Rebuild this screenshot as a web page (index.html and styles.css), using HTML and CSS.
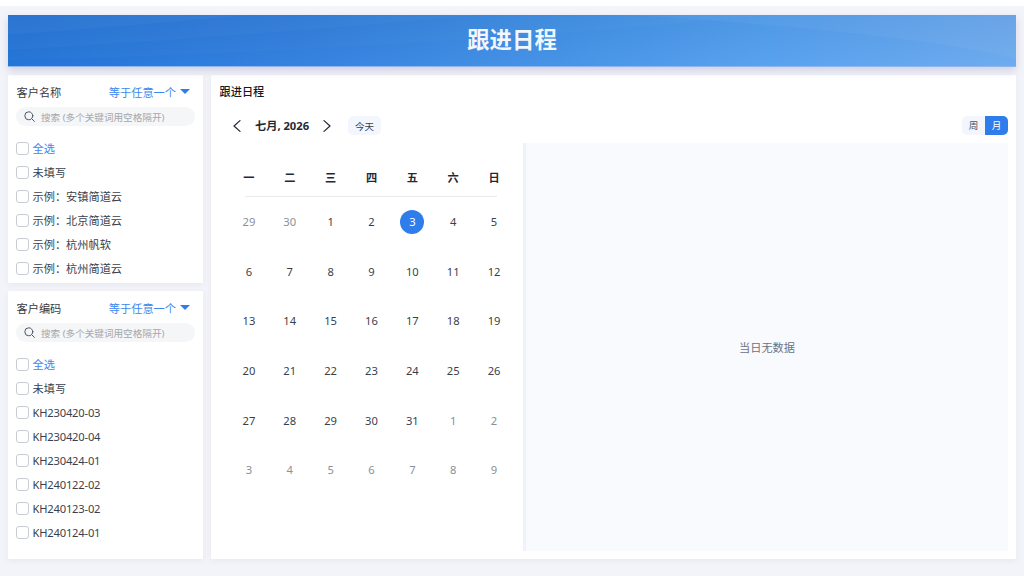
FILE: index.html
```html
<!DOCTYPE html>
<html lang="zh-CN">
<head>
  <meta charset="UTF-8" />
  <title>跟进日程</title>
  <link rel="stylesheet" href="styles.css">
</head>
<body>
  <div class="page">
    <div class="banner">
      <svg class="banner-waves" viewBox="0 0 1008 52" preserveAspectRatio="none">
        <path d="M0 20C90 14 170 6 240 0H0Z" fill="#fff" fill-opacity="0.035"/>
        <path d="M0 36C160 26 320 14 470 0H0Z" fill="#fff" fill-opacity="0.025"/>
        <path d="M0 46C250 40 520 24 760 0H0Z" fill="#fff" fill-opacity="0.02"/>
        <path d="M620 0C780 10 920 24 1008 44V0Z" fill="#fff" fill-opacity="0.04"/>
      </svg>
      <h1>跟进日程</h1>
    </div>

    <div class="main">
      <div class="filters">
        <div class="filter-card">
          <div class="filter-head">
            <span>客户名称</span>
            <span class="filter-mode">等于任意一个<i class="caret"></i></span>
          </div>
          <div class="search">
            <svg width="11" height="11" viewBox="0 0 11 11" fill="none" stroke="#4b5563" stroke-width="1" stroke-linecap="round"><circle cx="4.8" cy="4.8" r="4"/><path d="M7.8 7.8L10.4 10.4"/></svg>
            <span>搜索 (多个关键词用空格隔开)</span>
          </div>
          <div class="option-list">
            <label class="option all"><i class="check"></i>全选</label>
            <label class="option"><i class="check"></i>未填写</label>
            <label class="option"><i class="check"></i>示例：安镇简道云</label>
            <label class="option"><i class="check"></i>示例：北京简道云</label>
            <label class="option"><i class="check"></i>示例：杭州帆软</label>
            <label class="option"><i class="check"></i>示例：杭州简道云</label>
          </div>
        </div>

        <div class="filter-card grow">
          <div class="filter-head">
            <span>客户编码</span>
            <span class="filter-mode">等于任意一个<i class="caret"></i></span>
          </div>
          <div class="search">
            <svg width="11" height="11" viewBox="0 0 11 11" fill="none" stroke="#4b5563" stroke-width="1" stroke-linecap="round"><circle cx="4.8" cy="4.8" r="4"/><path d="M7.8 7.8L10.4 10.4"/></svg>
            <span>搜索 (多个关键词用空格隔开)</span>
          </div>
          <div class="option-list">
            <label class="option all"><i class="check"></i>全选</label>
            <label class="option"><i class="check"></i>未填写</label>
            <label class="option code"><i class="check"></i>KH230420-03</label>
            <label class="option code"><i class="check"></i>KH230420-04</label>
            <label class="option code"><i class="check"></i>KH230424-01</label>
            <label class="option code"><i class="check"></i>KH240122-02</label>
            <label class="option code"><i class="check"></i>KH240123-02</label>
            <label class="option code"><i class="check"></i>KH240124-01</label>
          </div>
        </div>
      </div>

      <div class="schedule">
        <div class="schedule-title">跟进日程</div>
        <div class="toolbar">
          <div class="month-nav">
            <svg class="chevron" width="10" height="12" viewBox="0 0 10 12" fill="none" stroke="#1f2937" stroke-width="1.2" stroke-linecap="round" stroke-linejoin="round"><path d="M8 .6L2 6L8 11.4"/></svg>
            <span class="month-label">七月, 2026</span>
            <svg class="chevron" width="10" height="12" viewBox="0 0 10 12" fill="none" stroke="#1f2937" stroke-width="1.2" stroke-linecap="round" stroke-linejoin="round"><path d="M2 .6L8 6L2 11.4"/></svg>
            <button class="today-btn">今天</button>
          </div>
          <div class="view-switch">
            <span class="view-item">周</span>
            <span class="view-item active">月</span>
          </div>
        </div>

        <div class="schedule-body">
          <div class="calendar">
            <div class="week-head">
              <span>一</span><span>二</span><span>三</span><span>四</span><span>五</span><span>六</span><span>日</span>
            </div>
            <div class="days">
              <span class="day muted">29</span><span class="day muted">30</span><span class="day">1</span><span class="day">2</span><span class="day"><b class="today">3</b></span><span class="day">4</span><span class="day">5</span>
              <span class="day">6</span><span class="day">7</span><span class="day">8</span><span class="day">9</span><span class="day">10</span><span class="day">11</span><span class="day">12</span>
              <span class="day">13</span><span class="day">14</span><span class="day">15</span><span class="day">16</span><span class="day">17</span><span class="day">18</span><span class="day">19</span>
              <span class="day">20</span><span class="day">21</span><span class="day">22</span><span class="day">23</span><span class="day">24</span><span class="day">25</span><span class="day">26</span>
              <span class="day">27</span><span class="day">28</span><span class="day">29</span><span class="day">30</span><span class="day">31</span><span class="day muted">1</span><span class="day muted">2</span>
              <span class="day muted">3</span><span class="day muted">4</span><span class="day muted">5</span><span class="day muted">6</span><span class="day muted">7</span><span class="day muted">8</span><span class="day muted">9</span>
            </div>
          </div>
          <div class="day-detail">当日无数据</div>
        </div>
      </div>
    </div>
  </div>
</body>
</html>
```

FILE: styles.css
```css
* {
  box-sizing: border-box;
  margin: 0;
  padding: 0;
}
body {
  background-color: white;
  color: #1f2937;
  font-family: "Noto Sans", "Noto Sans CJK SC", sans-serif;
  font-size: 11.2px;
  overflow: hidden;
}
.page {
  background-color: #f3f4f9;
  margin-top: 6px;
  height: 570px;
  padding: 9px 8px 0;
}
.banner {
  position: relative;
  height: 52px;
  margin-bottom: 8px;
  background:
    linear-gradient(to bottom, rgb(0 0 0 / 0.04), rgb(255 255 255 / 0.04)),
    linear-gradient(100deg, #1a6fd6 0%, #2e7dde 30%, #4090e6 55%, #529eee 75%, #69a8ee 100%);
  border-bottom: 1px solid #8db6ee;
  box-shadow: 0 4px 8px rgb(90 70 150 / 0.2);
  overflow: hidden;
}
.banner-waves {
  position: absolute;
  inset: 0;
  width: 100%;
  height: 100%;
}
.banner h1 {
  position: relative;
  color: #f2f6fd;
  font-size: 22.4px;
  font-weight: 700;
  line-height: 50px;
  text-align: center;
}
.main {
  display: flex;
  gap: 8px;
  height: 484px;
}
.filters {
  width: 195px;
  display: flex;
  flex-direction: column;
  gap: 8px;
}
.filter-card {
  background-color: white;
  box-shadow: 0 2px 6px rgb(60 60 120 / 0.06);
  height: 208px;
  padding: 8px;
}
.filter-card.grow {
  flex: 1;
  height: auto;
}
.filter-head {
  display: flex;
  justify-content: space-between;
  align-items: center;
  height: 17px;
  padding-left: 0.5px;
  color: #3a3a40;
}
.filter-mode {
  display: flex;
  align-items: center;
  color: #3b86ee;
  margin-right: 5px;
}
.caret {
  width: 0;
  height: 0;
  margin-left: 4px;
  border-left: 5px solid transparent;
  border-right: 5px solid transparent;
  border-top: 5.5px solid #2f7dea;
}
.search {
  display: flex;
  align-items: center;
  gap: 6px;
  height: 19px;
  margin-top: 7px;
  padding: 0 8px;
  border-radius: 10px;
  background-color: #f5f6f8;
  color: #a3a7ae;
  font-size: 9.6px;
}
.search svg {
  flex-shrink: 0;
}
.option-list {
  margin-top: 10px;
}
.option {
  display: flex;
  align-items: center;
  gap: 3.5px;
  height: 24px;
  color: #3a3f4d;
}
.option.all {
  color: #3b86ee;
}
.option.code {
  letter-spacing: -0.2px;
}
.check {
  width: 13px;
  height: 13px;
  border: 1px solid #c8ccd4;
  border-radius: 3px;
  background-color: white;
}
.schedule {
  flex: 1;
  background-color: white;
  box-shadow: 0 2px 6px rgb(60 60 120 / 0.06);
  padding: 8px;
  display: flex;
  flex-direction: column;
}
.schedule-title {
  height: 17px;
  padding-left: 0.5px;
  font-weight: 500;
  color: #18181b;
}
.toolbar {
  display: flex;
  justify-content: space-between;
  align-items: center;
  height: 19px;
  margin-top: 16px;
}
.month-nav {
  display: flex;
  align-items: center;
  padding-left: 13px;
}
.month-label {
  width: 54px;
  margin: 0 13px;
  font-weight: 700;
  line-height: 17px;
  white-space: nowrap;
}
.today-btn {
  height: 19px;
  width: 33px;
  margin-left: 16px;
  border: none;
  border-radius: 5px;
  background-color: #f3f6fc;
  color: #374151;
  font-family: inherit;
  font-size: 9.6px;
}
.view-switch {
  display: flex;
  height: 19px;
  border-radius: 5px;
  overflow: hidden;
  font-size: 9.6px;
}
.view-item {
  width: 23px;
  line-height: 19px;
  text-align: center;
  background-color: #f3f6fc;
  color: #4b5563;
}
.view-item.active {
  background-color: #2f7dea;
  color: white;
}
.schedule-body {
  flex: 1;
  display: flex;
  margin-top: 8px;
}
.calendar {
  width: 304px;
  padding: 0 8.5px 0 9.5px;
}
.week-head {
  display: grid;
  grid-template-columns: repeat(7, 1fr);
  height: 54px;
  padding-top: 25px;
  line-height: 20px;
  text-align: center;
  font-weight: 700;
  position: relative;
}
.week-head::after {
  content: "";
  position: absolute;
  left: 16.5px;
  right: 17.5px;
  bottom: 0;
  border-bottom: 1px solid #e8eaee;
}
.days {
  display: grid;
  grid-template-columns: repeat(7, 1fr);
  grid-auto-rows: 49.6px;
}
.day {
  display: flex;
  align-items: center;
  justify-content: center;
  color: #3a3f4d;
}
.day.muted {
  color: #8a8f99;
}
.today {
  width: 24px;
  height: 24px;
  line-height: 24px;
  text-align: center;
  border-radius: 50%;
  background-color: #2f7dea;
  color: white;
  font-weight: 400;
}
.day-detail {
  flex: 1;
  display: flex;
  align-items: center;
  justify-content: center;
  border-left: 3px solid #edf2fb;
  background-color: #f9fafe;
  color: #6b7280;
}
```
